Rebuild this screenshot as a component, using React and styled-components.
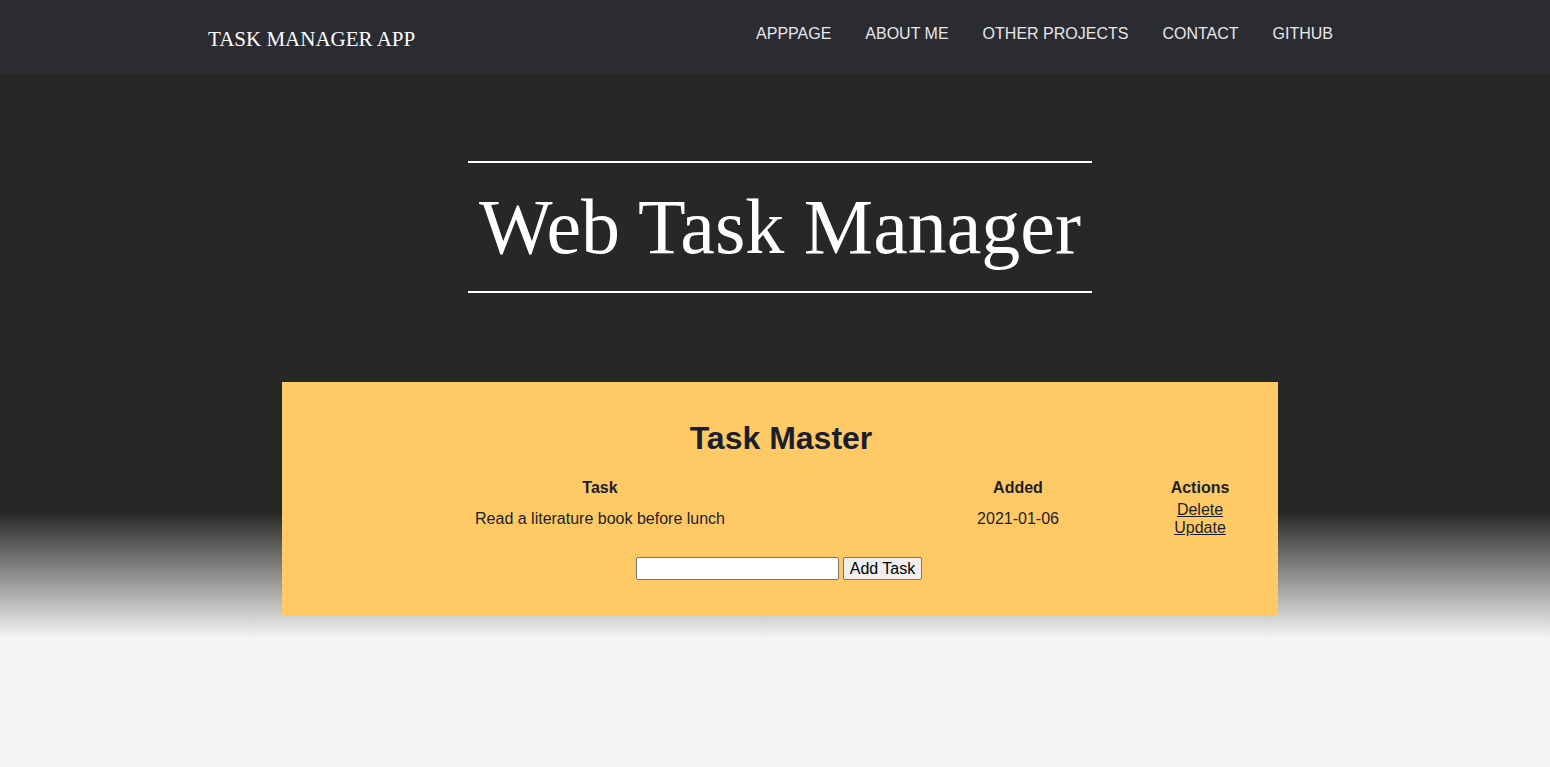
import React from "react";
import styled, { createGlobalStyle } from "styled-components";

const GlobalStyle = createGlobalStyle`
  html, body {
    margin: 0;
    padding: 0;
  }
  body {
    font-family: "Liberation Sans", Arial, sans-serif;
    background: #f4f4f4;
  }
`;

const Page = styled.div`
  min-height: 100vh;
  background: linear-gradient(
    to bottom,
    #272727 0,
    #272727 512px,
    #f4f4f4 638px,
    #f4f4f4 100%
  );
`;

const Navbar = styled.nav`
  height: 74px;
  background: #2b2c31;
`;

const NavInner = styled.div`
  width: 1134px;
  box-sizing: border-box;
  margin: 0 auto;
  padding-right: 9px;
  height: 100%;
  display: flex;
  align-items: center;
  justify-content: space-between;
`;

const Brand = styled.a`
  font-family: "Liberation Serif", "Times New Roman", serif;
  font-size: 21px;
  color: #ffffff;
  text-decoration: none;
  margin-top: 4px;
`;

const NavList = styled.ul`
  list-style: none;
  display: flex;
  gap: 34px;
  margin: 0 0 6px;
  padding: 0;
`;

const NavLink = styled.a`
  font-size: 16px;
  color: #e8e8e8;
  text-decoration: none;
  text-transform: uppercase;
`;

const Main = styled.main`
  padding-left: 10px;
`;

const Hero = styled.header`
  display: flex;
  justify-content: center;
  padding-top: 87px;
`;

const Title = styled.h1`
  width: 624px;
  margin: 0;
  border-top: 2px solid #ffffff;
  border-bottom: 2px solid #ffffff;
  padding: 18px 0 19px;
  text-align: center;
  font-family: "Liberation Serif", "Times New Roman", serif;
  font-weight: normal;
  font-size: 78px;
  line-height: 91px;
  color: #ffffff;
`;

const Card = styled.section`
  width: 996px;
  margin: 89px auto 0;
  background: #ffca66;
  padding: 38px 48px 35px 50px;
  box-sizing: border-box;
  color: #1b1e2c;
  text-align: center;
`;

const CardTitle = styled.h2`
  margin: 0;
  font-size: 32px;
  line-height: 36px;
  font-weight: bold;
`;

const Table = styled.table`
  width: 898px;
  margin-top: 20px;
  border-spacing: 2px;
  table-layout: fixed;
  font-size: 16px;
  line-height: 18px;
`;

const Th = styled.th`
  padding: 1px 0;
  width: ${(p) => p.$w}px;
`;

const Td = styled.td`
  padding: 1px 0;
`;

const ActionLink = styled.a`
  display: block;
  color: #1b1e2c;
  text-decoration: underline;
`;

const Form = styled.form`
  display: flex;
  justify-content: center;
  gap: 4px;
  margin-top: 17px;
  padding-right: 4px;
`;

const Input = styled.input`
  width: 201px;
  height: 19px;
  padding: 1px 0;
  border: 1px solid #767676;
  border-radius: 2px;
  background: #fff;
  font-size: 16px;
`;

const Button = styled.button`
  height: 23px;
  padding: 0 6px;
  border: 1px solid #767676;
  border-radius: 2px;
  background: #efefef;
  color: #000;
  font-family: "Liberation Sans", Arial, sans-serif;
  font-size: 16px;
  line-height: 20px;
`;

const links = ["Apppage", "About me", "Other projects", "Contact", "Github"];

const tasks = [{ content: "Read a literature book before lunch", date: "2021-01-06" }];

export default function App() {
  return (
    <Page>
      <GlobalStyle />
      <Navbar>
        <NavInner>
          <Brand href="#">TASK MANAGER APP</Brand>
          <NavList>
            {links.map((l) => (
              <li key={l}>
                <NavLink href="#">{l}</NavLink>
              </li>
            ))}
          </NavList>
        </NavInner>
      </Navbar>
      <Main>
        <Hero>
          <Title>Web Task Manager</Title>
        </Hero>
        <Card>
          <CardTitle>Task Master</CardTitle>
          <Table>
            <thead>
              <tr>
                <Th $w={532}>Task</Th>
                <Th $w={300}>Added</Th>
                <Th $w={60}>Actions</Th>
              </tr>
            </thead>
            <tbody>
              {tasks.map((t) => (
                <tr key={t.content}>
                  <Td>{t.content}</Td>
                  <Td>{t.date}</Td>
                  <Td>
                    <ActionLink href="#">Delete</ActionLink>
                    <ActionLink href="#">Update</ActionLink>
                  </Td>
                </tr>
              ))}
            </tbody>
          </Table>
          <Form onSubmit={(e) => e.preventDefault()}>
            <Input type="text" name="content" />
            <Button type="submit">Add Task</Button>
          </Form>
        </Card>
      </Main>
    </Page>
  );
}
